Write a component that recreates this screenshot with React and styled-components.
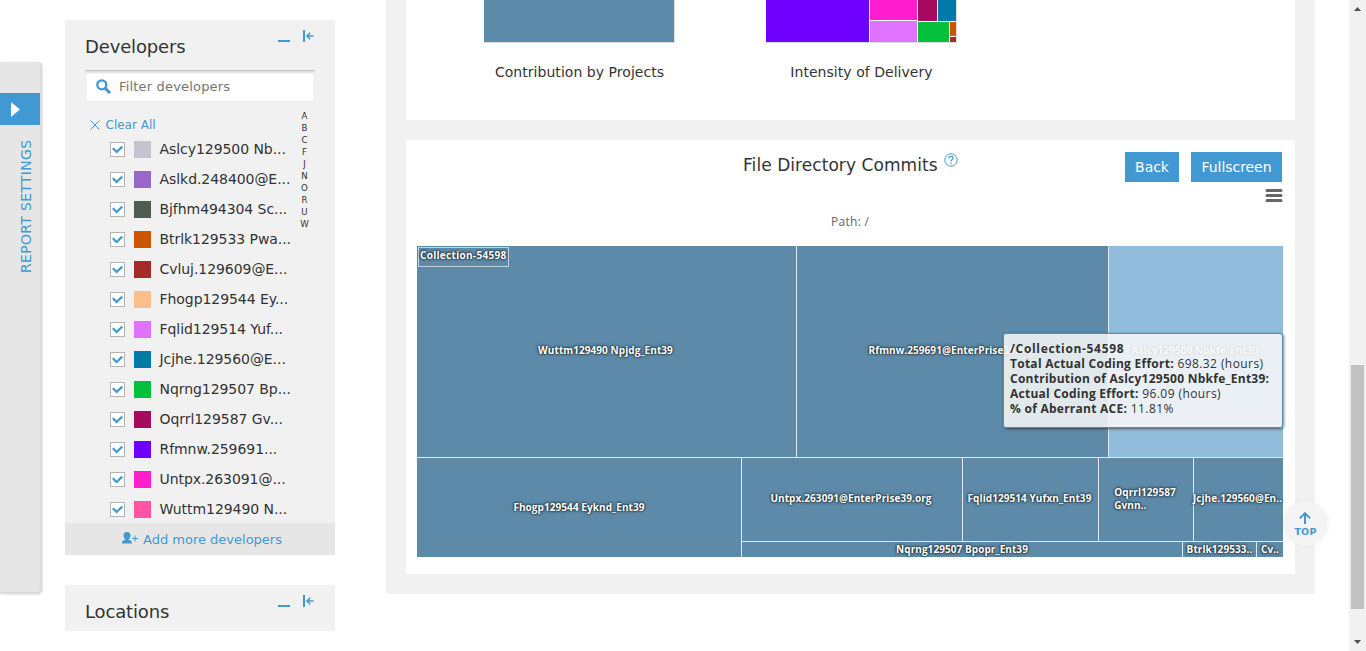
import React from 'react';
import styled, { createGlobalStyle } from 'styled-components';

const blue = '#4199d3';
const cellBlue = '#5d8aa8';

const GlobalStyle = createGlobalStyle`
  * { box-sizing: border-box; }
  body { margin: 0; background: #fff; overflow: hidden; }
`;

const Page = styled.div`
  display: flex;
  position: relative;
  width: 1366px;
  height: 651px;
  overflow: hidden;
  font-family: "DejaVu Sans", Verdana, sans-serif;
  color: #333;
  white-space: nowrap;
`;

/* Settings rail */
const Rail = styled.aside`
  width: 42px;
  height: 531px;
  margin-top: 62px;
  padding-top: 31px;
  background: #e6e6e6;
  border-right: 2px solid #dcdcdc;
  border-bottom: 1px solid #d9d9d9;
  border-radius: 0 4px 4px 0;
  box-shadow: 0 1px 3px rgba(0, 0, 0, 0.2);
`;
const RailToggle = styled.div`
  width: 40px;
  height: 32px;
  padding: 9px 0 0 11px;
  background: ${blue};
  svg { display: block; }
`;
const RailLabel = styled.div`
  width: 18px;
  height: 135px;
  margin: 15px 0 0 17px;
  writing-mode: vertical-rl;
  transform: rotate(180deg);
  text-align: right;
  font-size: 14px;
  line-height: 18px;
  letter-spacing: 0.32px;
  color: ${blue};
`;

/* Filter panels */
const Sidebar = styled.div`
  display: flex;
  flex-direction: column;
  gap: 30px;
  width: 270px;
  margin: 20px 51px 0 23px;
`;
const Panel = styled.section`
  background: #f1f1f1;
  height: ${(p) => p.$height}px;
  position: relative;
`;
const PanelHeader = styled.header`
  display: flex;
  align-items: flex-start;
  height: 50px;
  padding: 0 21px 0 20px;
`;
const PanelTitle = styled.h2`
  flex: 1;
  margin: 15px 0 0;
  font-size: 18px;
  font-weight: 400;
  line-height: 24px;
  letter-spacing: -0.15px;
`;
const Minimize = styled.i`
  width: 12px;
  height: 2px;
  margin: 20px 12px 0 0;
  background: ${blue};
`;
const Collapse = styled.svg`
  width: 12px;
  height: 12px;
  margin-top: 10px;
`;
const SearchBox = styled.div`
  display: flex;
  align-items: center;
  width: 230px;
  height: 32px;
  margin-left: 20px;
  padding: 0 0 0 10px;
  background: #fff;
  border: 1px solid #ececec;
  border-top: 1px solid #c2c2c2;
  box-shadow: inset 0 2px 2px #ddd;
  font-size: 13px;
  letter-spacing: 0.18px;
  color: #757575;
  svg { margin-right: 8px; }
`;
const ClearAll = styled.div`
  display: flex;
  align-items: center;
  gap: 6px;
  height: 15px;
  margin: 15px 0 0 24.5px;
  font-size: 12px;
  color: ${blue};
`;
const DeveloperArea = styled.div`
  display: flex;
  justify-content: space-between;
  padding: 0 26px 0 45px;
`;
const DeveloperList = styled.ul`
  margin: 2px 0 0;
  padding: 0;
  list-style: none;
`;
const DeveloperRow = styled.li`
  display: flex;
  align-items: center;
  height: 30px;
  font-size: 14px;
  letter-spacing: -0.06px;
`;
const Check = styled.span`
  display: flex;
  align-items: center;
  justify-content: center;
  width: 15px;
  height: 15px;
  margin-top: 1px;
  background: #fff;
  border: 1px solid #b4b4b4;
`;
const Swatch = styled.span`
  width: 17px;
  height: 17px;
  margin: 0 8.5px 0 9px;
  background: ${(p) => p.$color};
`;
const Alphabet = styled.div`
  width: 9px;
  margin-top: -22px;
  font-size: 8.6px;
  line-height: 12px;
  text-align: center;
`;
const AddMore = styled.footer`
  display: flex;
  align-items: center;
  gap: 4px;
  position: absolute;
  left: 0;
  right: 0;
  bottom: 0;
  height: 32px;
  padding-left: 57px;
  background: #e6e6e6;
  color: ${blue};
  font-size: 13px;
  svg { margin-bottom: 2px; }
`;

/* Main content */
const Main = styled.main`
  width: 929px;
  height: 594px;
  padding: 0 20px;
  background: #f1f1f1;
`;
const SummaryCard = styled.section`
  display: flex;
  gap: 91px;
  height: 120px;
  padding-left: 78px;
  background: #fff;
`;
const Figure = styled.figure`
  width: 191px;
  margin: 0;
`;
const Thumb = styled.div`
  display: flex;
  width: 191px;
  height: 43px;
  border: solid #ddd;
  border-width: 0 1px 1px 0;
`;
const Caption = styled.figcaption`
  margin-top: 19px;
  font-size: 14px;
  line-height: 20px;
  letter-spacing: 0.04px;
  text-align: center;
`;
const Row = styled.div`
  display: flex;
  flex: ${(p) => (p.$size ? `0 0 ${p.$size}px` : '1')};
  min-width: 0;
  min-height: 0;
  gap: 1px;
`;
const Column = styled(Row)`
  flex-direction: column;
`;
const Block = styled.div`
  flex: ${(p) => (p.$size ? `0 0 ${p.$size}px` : '1')};
  background: ${(p) => p.$color};
`;

const CommitsCard = styled.section`
  height: 434px;
  margin-top: 20px;
  padding: 0 12px 0 11px;
  background: #fff;
`;
const CommitsHeader = styled.header`
  display: flex;
  align-items: flex-start;
  height: 42px;
  padding: 12px 1px 0 326px;
`;
const CommitsTitle = styled.h1`
  margin: 1px 0 0;
  font-size: 17px;
  font-weight: 400;
  line-height: 24px;
  letter-spacing: 0.06px;
`;
const Help = styled.svg`
  width: 14px;
  height: 14px;
  margin: 1px auto 0 6px;
`;
const Button = styled.button`
  width: ${(p) => p.$width}px;
  height: 30px;
  margin-left: 12px;
  padding: 0;
  border: 0;
  background: ${blue};
  color: #fff;
  font-family: inherit;
  font-size: 14px;
  letter-spacing: -0.05px;
`;
const MenuRow = styled.div`
  display: flex;
  justify-content: flex-end;
  height: 33px;
  padding-top: 7px;
`;
const Path = styled.div`
  height: 31px;
  padding-left: 414px;
  font: 12px/14px "Open Sans", sans-serif;
  letter-spacing: 0.3px;
  color: #666;
`;
const Treemap = styled.div`
  display: flex;
  flex-direction: column;
  gap: 1px;
  position: relative;
  width: 866px;
  height: 311px;
  background: #dfe9f0;
`;
const Cell = styled.div`
  display: flex;
  align-items: center;
  justify-content: center;
  flex: ${(p) => (p.$size ? `0 0 ${p.$size}px` : '1')};
  min-width: 0;
  min-height: 0;
  padding: ${(p) => (p.$raised ? '0 2px 2px 0' : '0')};
  background: ${(p) => (p.$active ? '#91bcdc' : cellBlue)};
  color: #fff;
  font: 700 10px/13px "Open Sans", sans-serif;
  letter-spacing: 0.07px;
  text-shadow: 0 0 3px #000, 0 0 2px rgba(0, 0, 0, 0.5);
`;
const CollectionTag = styled.div`
  position: absolute;
  left: 1px;
  top: 1px;
  width: 91px;
  height: 20px;
  padding: 0 0 0 1px;
  border: 1px solid #c3d3de;
  color: #fff;
  font: 700 10px/14px "Open Sans", sans-serif;
  letter-spacing: 0.3px;
  text-shadow: 0 0 3px #000, 0 0 2px rgba(0, 0, 0, 0.5);
`;
const Tooltip = styled.div`
  position: absolute;
  left: 585.5px;
  top: 87px;
  width: 280px;
  height: 95px;
  padding: 7px 6.5px;
  border: 1px solid ${cellBlue};
  border-radius: 3px;
  background: rgba(249, 249, 249, 0.85);
  box-shadow: 1px 1px 3px rgba(0, 0, 0, 0.5);
  color: #333;
  font: 12px/15px "Open Sans", sans-serif;
  letter-spacing: 0.42px;
  b { letter-spacing: 0.26px; }
`;
const TipTitle = styled.b`
  && { letter-spacing: 0.66px; }
`;

/* Page chrome */
const TopButton = styled.div`
  position: absolute;
  left: 1283px;
  top: 501px;
  width: 45px;
  height: 45px;
  padding-top: 11px;
  border-radius: 50%;
  background: rgba(243, 243, 243, 0.94);
  box-shadow: 0 0 4px rgba(0, 0, 0, 0.06);
  color: ${blue};
  font: 700 9.5px/11px "DejaVu Sans", sans-serif;
  letter-spacing: 0.2px;
  text-align: center;
  svg { display: block; margin: 0 0 2px 16px; }
`;
const Scrollbar = styled.div`
  display: flex;
  flex-direction: column;
  width: 17px;
  height: 651px;
  margin-left: 34px;
  padding: 7px 2px 7px;
  background: #f1f1f1;
  svg { display: block; margin-left: 3px; }
`;
const ScrollThumb = styled.div`
  width: 13px;
  height: 244px;
  margin: 354px 0 auto;
  background: #c1c1c1;
`;

const developers = [
  ['Aslcy129500 Nb...', '#c4c3d0'],
  ['Aslkd.248400@E...', '#9966cc'],
  ['Bjfhm494304 Sc...', '#4e5d52'],
  ['Btrlk129533 Pwa...', '#cc5500'],
  ['Cvluj.129609@E...', '#a52a2a'],
  ['Fhogp129544 Ey...', '#ffbd88'],
  ['Fqlid129514 Yuf...', '#df73ff'],
  ['Jcjhe.129560@E...', '#007ba7'],
  ['Nqrng129507 Bp...', '#03c03c'],
  ['Oqrrl129587 Gv...', '#a50b5e'],
  ['Rfmnw.259691...', '#6f00ff'],
  ['Untpx.263091@...', '#ff1dce'],
  ['Wuttm129490 N...', '#ff55a3'],
];

function Header({ title }) {
  return (
    <PanelHeader>
      <PanelTitle>{title}</PanelTitle>
      <Minimize />
      <Collapse viewBox="0 0 12 12" fill="none" stroke={blue} strokeWidth="1.6">
        <path d="M2 0v12" strokeWidth="2" />
        <path d="M11.5 6H5M8.2 2.7L5 6L8.2 9.3" />
      </Collapse>
    </PanelHeader>
  );
}

export default function App() {
  return (
    <Page>
      <GlobalStyle />
      <Rail>
        <RailToggle>
          <svg width="10" height="15" viewBox="0 0 10 15"><path d="M0 0L9 7.5L0 15z" fill="#fff" /></svg>
        </RailToggle>
        <RailLabel>REPORT SETTINGS</RailLabel>
      </Rail>

      <Sidebar>
        <Panel $height={535}>
          <Header title="Developers" />
          <SearchBox>
            <svg width="15" height="15" viewBox="0 0 15 15" fill="none" stroke={blue}>
              <circle cx="5.8" cy="5.8" r="4.5" strokeWidth="2.3" />
              <path d="M9.2 9.2L14 14" strokeWidth="3" />
            </svg>
            Filter developers
          </SearchBox>
          <ClearAll>
            <svg width="10" height="10" viewBox="0 0 10 10" stroke={blue}><path d="M.5.5l9 9M9.5.5l-9 9" /></svg>
            Clear All
          </ClearAll>
          <DeveloperArea>
            <DeveloperList>
              {developers.map(([name, color]) => (
                <DeveloperRow key={name}>
                  <Check>
                    <svg width="11" height="9" viewBox="0 0 11 9" fill="none" stroke={blue} strokeWidth="2.2">
                      <path d="M.8 3.2L4.6 7L10.2 1.6" />
                    </svg>
                  </Check>
                  <Swatch $color={color} />
                  {name}
                </DeveloperRow>
              ))}
            </DeveloperList>
            <Alphabet>
              {'ABCFJNORUW'.split('').map((c) => <div key={c}>{c}</div>)}
            </Alphabet>
          </DeveloperArea>
          <AddMore>
            <svg width="17" height="12" viewBox="0 0 17 12" fill={blue}>
              <path d="M5 0C2.4 0 1.5 1.5 1.5 3.4C1.5 5.1 2.3 6.2 3.2 7V7.8L1 8.8Q0 9.5 0 11.5H10Q10 9.5 9 8.8L6.8 7.8V7C7.7 6.2 8.5 5.1 8.5 3.4C8.5 1.5 7.6 0 5 0z" />
              <path d="M10 6.5h6M13 3.5v6" stroke={blue} fill="none" />
            </svg>
            Add more developers
          </AddMore>
        </Panel>
        <Panel $height={46}>
          <Header title="Locations" />
        </Panel>
      </Sidebar>

      <Main>
        <SummaryCard>
          <Figure>
            <Thumb><Block $color={cellBlue} /></Thumb>
            <Caption>Contribution by Projects</Caption>
          </Figure>
          <Figure>
            <Thumb>
              <Row>
                <Block $size={103} $color="#6f00ff" />
                <Column $size={47}>
                  <Block $size={20} $color="#ff1dce" />
                  <Block $color="#df73ff" />
                </Column>
                <Column>
                  <Row $size={21}>
                    <Block $size={19} $color="#a50b5e" />
                    <Block $color="#007ba7" />
                  </Row>
                  <Row>
                    <Block $size={31} $color="#03c03c" />
                    <Column>
                      <Block $size={14} $color="#cc5500" />
                      <Block $color="#a52a2a" />
                    </Column>
                  </Row>
                </Column>
              </Row>
            </Thumb>
            <Caption>Intensity of Delivery</Caption>
          </Figure>
        </SummaryCard>

        <CommitsCard>
          <CommitsHeader>
            <CommitsTitle>File Directory Commits</CommitsTitle>
            <Help viewBox="0 0 14 14" fill="none" stroke={blue}>
              <circle cx="7" cy="7" r="6.2" />
              <path d="M4.9 5.4C4.9 4 5.8 3.4 7 3.4C8.3 3.4 9.1 4.1 9.1 5.2C9.1 6.6 7 6.7 7 8.4M7 9.4v1.5" strokeWidth="1.2" />
            </Help>
            <Button $width={54}>Back</Button>
            <Button $width={91}>Fullscreen</Button>
          </CommitsHeader>
          <MenuRow>
            <svg width="18" height="14" viewBox="0 0 18 14" stroke="#666" strokeWidth="3" strokeLinecap="round">
              <path d="M2 1.5h14M2 6.5h14M2 11.5h14" />
            </svg>
          </MenuRow>
          <Path>Path: /</Path>
          <Treemap>
            <Row $size={211}>
              <Cell $raised $size={379}>Wuttm129490 Npjdg_Ent39</Cell>
              <Cell $raised $size={311}>Rfmnw.259691@EnterPrise39.org</Cell>
              <Cell $raised $active>Aslcy129500 Nbkfe_Ent39</Cell>
            </Row>
            <Row>
              <Cell $size={324}>Fhogp129544 Eyknd_Ent39</Cell>
              <Column>
                <Row $size={83}>
                  <Cell $raised $size={220}>Untpx.263091@EnterPrise39.org</Cell>
                  <Cell $raised $size={135}>Fqlid129514 Yufxn_Ent39</Cell>
                  <Cell $raised $size={94}><span>Oqrrl129587<br />Gvnn..</span></Cell>
                  <Cell $raised>Jcjhe.129560@En..</Cell>
                </Row>
                <Row>
                  <Cell $size={440}>Nqrng129507 Bpopr_Ent39</Cell>
                  <Cell $size={73}>Btrlk129533..</Cell>
                  <Cell>Cv..</Cell>
                </Row>
              </Column>
            </Row>
            <CollectionTag>Collection-54598</CollectionTag>
            <Tooltip>
              <TipTitle>/Collection-54598</TipTitle><br />
              <b>Total Actual Coding Effort:</b> 698.32 (hours)<br />
              <b>Contribution of Aslcy129500 Nbkfe_Ent39:</b><br />
              <b>Actual Coding Effort:</b> 96.09 (hours)<br />
              <b>% of Aberrant ACE:</b> 11.81%
            </Tooltip>
          </Treemap>
        </CommitsCard>
      </Main>

      <Scrollbar>
        <svg width="7" height="4" viewBox="0 0 7 4"><path d="M3.5 0L7 4H0z" fill="#505050" /></svg>
        <ScrollThumb />
        <svg width="7" height="4" viewBox="0 0 7 4"><path d="M3.5 4L7 0H0z" fill="#505050" /></svg>
      </Scrollbar>

      <TopButton>
        <svg width="12" height="12" viewBox="0 0 12 12" fill="none" stroke={blue} strokeWidth="2">
          <path d="M6 12V1.5M.8 6.4L6 1.2L11.2 6.4" />
        </svg>
        TOP
      </TopButton>
    </Page>
  );
}
